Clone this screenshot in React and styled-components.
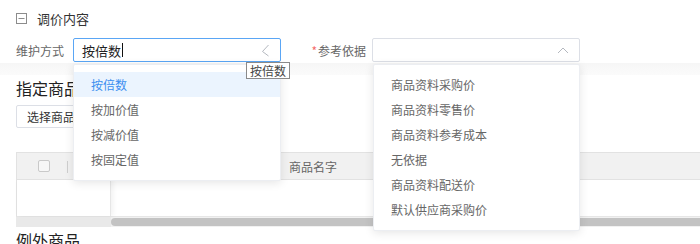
import React from 'react';
import styled, { createGlobalStyle } from 'styled-components';

const GlobalStyle = createGlobalStyle`
  html, body {
    margin: 0;
    padding: 0;
    background: #fff;
    overflow: hidden;
  }
  body {
    font-family: "Noto Sans CJK SC", "Noto Sans", sans-serif;
    color: #333;
  }
`;

const modeOptions = ['按倍数', '按加价值', '按减价值', '按固定值'];
const basisOptions = ['商品资料采购价', '商品资料零售价', '商品资料参考成本', '无依据', '商品资料配送价', '默认供应商采购价'];

function App() {
  return (
    <Page>
      <GlobalStyle />
      <TopSection>
        <SectionTitle>
          <svg width="11" height="11" viewBox="0 0 11 11">
            <rect x="0.5" y="0.5" width="10" height="10" fill="none" stroke="#8c8c8c" />
            <line x1="2.5" y1="5.5" x2="8.5" y2="5.5" stroke="#8c8c8c" />
          </svg>
          <span>调价内容</span>
        </SectionTitle>

        <FormRow>
          <Label>维护方式</Label>
          <SelectWrap $width={208}>
            <SelectBox $focused>
              <InputText>按倍数</InputText>
              <Caret />
              <ArrowIcon>
                <svg width="9" height="13" viewBox="0 0 9 13">
                  <polyline points="7.5,1 1.5,7.5 7.5,12" fill="none" stroke="#b4b8bf" strokeWidth="1" />
                </svg>
              </ArrowIcon>
            </SelectBox>
            <Menu>
              {modeOptions.map((o, i) => (
                <MenuItem key={o} $active={i === 0}>{o}</MenuItem>
              ))}
            </Menu>
            <Tip>按倍数</Tip>
          </SelectWrap>

          <RequiredLabel>
            <Star>*</Star>参考依据
          </RequiredLabel>
          <SelectWrap $width={208}>
            <SelectBox>
              <InputText />
              <ArrowIcon>
                <svg width="12" height="7" viewBox="0 0 12 7">
                  <polyline points="1,6 6,1 11,6" fill="none" stroke="#b4b8bf" strokeWidth="1" />
                </svg>
              </ArrowIcon>
            </SelectBox>
            <Menu $left={1}>
              {basisOptions.map((o) => (
                <MenuItem key={o}>{o}</MenuItem>
              ))}
            </Menu>
          </SelectWrap>
        </FormRow>
      </TopSection>

      <Band />

      <Section>
        <Heading>指定商品</Heading>
        <PlainButton>选择商品</PlainButton>

        <Table>
          <HeaderRow>
            <CheckCell>
              <CheckBox />
              <Divider />
            </CheckCell>
            <HeaderCell $left={221}>商品名字</HeaderCell>
          </HeaderRow>
          <BodyRow>
            <FixedCell />
          </BodyRow>
          <ScrollTrack>
            <FixedTrack />
            <Thumb />
          </ScrollTrack>
        </Table>

        <Heading $top={2}>例外商品</Heading>
      </Section>
    </Page>
  );
}

const Page = styled.div`
  width: 700px;
  height: 244px;
  overflow: hidden;
  position: relative;
`;

const TopSection = styled.div`
  padding: 8px 16px 0;
  position: relative;
  z-index: 2;
`;

const SectionTitle = styled.div`
  display: flex;
  align-items: center;
  gap: 10px;
  height: 20px;
  font-size: 13px;
  color: #333;
`;

const FormRow = styled.div`
  display: flex;
  align-items: center;
  margin-top: 10px;
  height: 24px;
`;

const Label = styled.div`
  width: 57px;
  font-size: 12px;
  color: #666;
`;

const RequiredLabel = styled.div`
  width: 57px;
  margin-left: 28px;
  padding-right: 6px;
  font-size: 12px;
  color: #666;
  text-align: right;
`;

const Star = styled.span`
  color: #f56c6c;
  margin-right: 1px;
`;

const SelectWrap = styled.div`
  position: relative;
  width: ${(p) => p.$width}px;
`;

const SelectBox = styled.div`
  box-sizing: border-box;
  height: 24px;
  border: 1px solid ${(p) => (p.$focused ? '#5aa6f5' : '#dcdfe6')};
  border-radius: 2px;
  display: flex;
  align-items: center;
  padding: 0 8px;
  background: #fff;
`;

const InputText = styled.span`
  font-size: 13px;
  color: #222;
`;

const Caret = styled.span`
  width: 1px;
  height: 14px;
  background: #111;
  margin-left: 1px;
`;

const ArrowIcon = styled.span`
  margin-left: auto;
  display: flex;
  align-items: center;
  padding-right: 2px;
`;

const Menu = styled.div`
  position: absolute;
  top: 26px;
  left: ${(p) => p.$left || 0}px;
  right: 0;
  box-sizing: border-box;
  padding: 7px 0 8px;
  background: #fff;
  border: 1px solid #eceef2;
  border-radius: 2px;
  box-shadow: 0 2px 10px rgba(0, 0, 0, 0.1);
  z-index: 5;
`;

const MenuItem = styled.div`
  height: 25px;
  line-height: 25px;
  padding-left: 17px;
  font-size: 12px;
  color: ${(p) => (p.$active ? '#3d8ff0' : '#666')};
  background: ${(p) => (p.$active ? '#ebf4fe' : 'transparent')};
`;

const Tip = styled.div`
  position: absolute;
  left: 173px;
  top: 24px;
  height: 17px;
  box-sizing: border-box;
  padding: 0 3px;
  border: 1px solid #8a8a8a;
  background: #fff;
  font-size: 12px;
  line-height: 15px;
  color: #444;
  white-space: nowrap;
  z-index: 6;
`;

const Band = styled.div`
  height: 12px;
  margin-top: 1px;
  background: linear-gradient(#f6f6f6, #fbfbfb);
`;

const Section = styled.div`
  padding: 0 16px;
`;

const Heading = styled.div`
  font-size: 16px;
  line-height: 22px;
  color: #222;
  margin-top: ${(p) => (p.$top !== undefined ? p.$top : 2)}px;
`;

const PlainButton = styled.div`
  display: inline-flex;
  align-items: center;
  height: 23px;
  box-sizing: border-box;
  margin-top: 6px;
  padding: 0 10px;
  border: 1px solid #dcdfe6;
  border-radius: 2px;
  font-size: 12px;
  color: #333;
`;

const Table = styled.div`
  margin-top: 24px;
  margin-right: -16px;
`;

const HeaderRow = styled.div`
  position: relative;
  display: flex;
  align-items: center;
  height: 28px;
  box-sizing: border-box;
  border-top: 1px solid #e2e2e2;
  border-bottom: 1px solid #e2e2e2;
  border-left: 1px solid #e2e2e2;
  background: #f1f1f1;
`;

const CheckCell = styled.div`
  width: 51px;
  display: flex;
  align-items: center;
  justify-content: center;
  position: relative;
  height: 100%;
`;

const CheckBox = styled.span`
  width: 12px;
  height: 12px;
  box-sizing: border-box;
  border: 1px solid #c9c9c9;
  border-radius: 2px;
  background: #f7f7f7;
  margin-left: 2px;
`;

const Divider = styled.span`
  position: absolute;
  right: 0;
  top: 8px;
  width: 1px;
  height: 12px;
  background: #cfcfcf;
`;

const HeaderCell = styled.div`
  margin-left: ${(p) => p.$left}px;
  font-size: 12px;
  color: #666;
`;

const BodyRow = styled.div`
  height: 37px;
  box-sizing: border-box;
  border-left: 1px solid #e2e2e2;
  border-bottom: 1px solid #e6e6e6;
  display: flex;
`;

const FixedCell = styled.div`
  width: 93px;
  height: 100%;
  border-right: 1px solid #e6e6e6;
  box-shadow: 2px 0 5px rgba(0, 0, 0, 0.06);
`;

const ScrollTrack = styled.div`
  height: 10px;
  display: flex;
  align-items: center;
  background: #f1f1f1;
`;

const FixedTrack = styled.div`
  width: 95px;
  height: 100%;
  background: #e9e9e9;
`;

const Thumb = styled.div`
  flex: 1;
  height: 8px;
  border-radius: 4px 0 0 4px;
  background: #c3c3c3;
`;

export default App;
